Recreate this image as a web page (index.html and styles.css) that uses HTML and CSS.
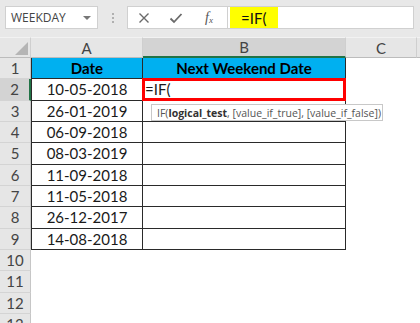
FILE: index.html
```html
<!DOCTYPE html>
<html>
<head>
<meta charset="utf-8">
<link rel="stylesheet" href="styles.css">
</head>
<body>
<div class="toolbar">
  <div class="namebox"><span>WEEKDAY</span><span class="caret"></span></div>
  <div class="grip"><i></i><i></i><i></i></div>
  <div class="fbox">
    <div class="ficons">
      <svg class="ico" width="12" height="12" viewBox="0 0 12 12"><path d="M1.5 1.5 L10.5 10.5 M10.5 1.5 L1.5 10.5" stroke="#6a6a6a" stroke-width="1.4" fill="none"/></svg>
      <svg class="ico" width="14" height="12" viewBox="0 0 14 12"><path d="M1.5 6.5 L5 10 L12.5 2" stroke="#6a6a6a" stroke-width="1.8" fill="none"/></svg>
      <span class="fx">f<sub>x</sub></span>
    </div>
    <div class="finput"><span class="hl">=IF(</span></div>
  </div>
</div>
<div class="sheet">
  <div class="corner"><span class="tri"></span></div>
  <div class="ch">A</div>
  <div class="ch sel">B</div>
  <div class="ch">C</div>
  <div class="ch last"></div>

  <div class="rh">1</div>
  <div class="c t a hd">Date</div>
  <div class="c t hd">Next Weekend Date</div>
  <div class="c"></div><div class="c"></div>

  <div class="rh rsel">2</div>
  <div class="c t a">10-05-2018</div>
  <div class="c t active"><span>=IF(</span><div class="tip">IF(<b>logical_test</b>, [value_if_true], [value_if_false])</div></div>
  <div class="c"></div><div class="c"></div>

  <div class="rh">3</div>
  <div class="c t a">26-01-2019</div>
  <div class="c t"></div>
  <div class="c"></div><div class="c"></div>

  <div class="rh">4</div>
  <div class="c t a">06-09-2018</div>
  <div class="c t"></div>
  <div class="c"></div><div class="c"></div>

  <div class="rh">5</div>
  <div class="c t a">08-03-2019</div>
  <div class="c t"></div>
  <div class="c"></div><div class="c"></div>

  <div class="rh">6</div>
  <div class="c t a">11-09-2018</div>
  <div class="c t"></div>
  <div class="c"></div><div class="c"></div>

  <div class="rh">7</div>
  <div class="c t a">11-05-2018</div>
  <div class="c t"></div>
  <div class="c"></div><div class="c"></div>

  <div class="rh">8</div>
  <div class="c t a">26-12-2017</div>
  <div class="c t"></div>
  <div class="c"></div><div class="c"></div>

  <div class="rh">9</div>
  <div class="c t a">14-08-2018</div>
  <div class="c t"></div>
  <div class="c"></div><div class="c"></div>

  <div class="rh">10</div><div class="c"></div><div class="c"></div><div class="c"></div><div class="c"></div>
  <div class="rh">11</div><div class="c"></div><div class="c"></div><div class="c"></div><div class="c"></div>
  <div class="rh">12</div><div class="c"></div><div class="c"></div><div class="c"></div><div class="c"></div>
  <div class="rh">13</div><div class="c"></div><div class="c"></div><div class="c"></div><div class="c"></div>
</div>
</body>
</html>
```
FILE: styles.css
```css
* { box-sizing: border-box; }
html, body { margin: 0; padding: 0; }
body {
  width: 420px;
  height: 323px;
  overflow: hidden;
  background: #fff;
  font-family: Lato, "Open Sans", sans-serif;
}
.toolbar {
  height: 37px;
  background: #e8e8e8;
  display: flex;
  align-items: flex-start;
  padding: 6px 0 0 5px;
}
.namebox {
  width: 93px;
  height: 23px;
  background: #fff;
  border: 1px solid #d0d0d0;
  display: flex;
  align-items: center;
  justify-content: space-between;
  padding: 0 6px 0 5px;
  font-family: "Open Sans", sans-serif;
  font-size: 12px;
  color: #444;
}
.caret {
  width: 0; height: 0;
  border-left: 4px solid transparent;
  border-right: 4px solid transparent;
  border-top: 4px solid #777;
}
.grip {
  width: 29px;
  height: 23px;
  display: flex;
  flex-direction: column;
  align-items: center;
  justify-content: center;
  gap: 2px;
}
.grip i { display: block; width: 2px; height: 2px; background: #b0b0b0; }
.fbox {
  width: 287px;
  height: 23px;
  display: flex;
  background: #fff;
  border: 1px solid #d0d0d0;
}
.ficons {
  width: 100px;
  display: flex;
  align-items: center;
  padding-left: 10px;
  gap: 19px;
  border-right: 1px solid #d0d0d0;
}
.fx {
  font-family: "Liberation Serif", serif;
  font-style: italic;
  font-size: 14px;
  color: #555;
  line-height: 1;
  margin-left: 3px;
}
.fx sub { font-size: 9px; vertical-align: -1px; }
.finput {
  flex: 1;
  padding: 0 0 0 2px;
  display: flex;
  align-items: stretch;
}
.hl {
  background: #ffff00;
  width: 48px;
  padding-left: 11px;
  display: flex;
  align-items: center;
  font-size: 15px;
  color: #111;
}
.sheet {
  display: grid;
  grid-template-columns: 31px 112px 203px 71px 3px;
  grid-template-rows: 21px;
  grid-auto-rows: 21.33px;
}
.corner, .ch {
  background: #e6e6e6;
  border-top: 1px solid #f2f2f2;
  border-bottom: 1px solid #bcbcbc;
  border-right: 1px solid #cfcfcf;
}
.corner { position: relative; }
.tri {
  position: absolute;
  right: 2px;
  bottom: 2px;
  width: 0; height: 0;
  border-left: 13px solid transparent;
  border-bottom: 13px solid #b5b5b5;
}
.ch {
  display: flex;
  align-items: center;
  justify-content: center;
  font-size: 15px;
  color: #444;
}
.ch.sel {
  background: #d3d3d3;
  border-bottom: 2px solid #217346;
}
.ch.last { border-right: none; }
.rh {
  background: #e6e6e6;
  border-bottom: 1px solid #d4d4d4;
  border-right: 1px solid #c6c6c6;
  display: flex;
  align-items: center;
  justify-content: center;
  font-size: 15px;
  color: #444;
}
.rh.rsel {
  background: #d3d3d3;
  border-right: 2px solid #217346;
}
.c {
  font-size: 15px;
  color: #1a1a1a;
  display: flex;
  align-items: center;
}
.c.t {
  justify-content: center;
  border-right: 1px solid #2a2a2a;
  border-bottom: 1px solid #2a2a2a;
}
.c.a { border-left: 1px solid #2a2a2a; }
.c.hd {
  background: #00b0f0;
  font-weight: bold;
  color: #000;
}
.c.active {
  position: relative;
  justify-content: flex-start;
  padding-left: 2px;
}
.c.active::after {
  content: "";
  position: absolute;
  left: -1px;
  top: -1px;
  right: -1px;
  bottom: -1px;
  border: 3px solid #ff0000;
}
.tip {
  position: absolute;
  left: 8px;
  top: 25px;
  width: 232px;
  height: 17px;
  background: #fff;
  border: 1px solid #c8c8c8;
  font-family: "Open Sans", sans-serif;
  font-size: 10.5px;
  color: #555;
  display: flex;
  align-items: center;
  padding-left: 5px;
  white-space: nowrap;
  z-index: 2;
}
.tip b { color: #333; }
```
